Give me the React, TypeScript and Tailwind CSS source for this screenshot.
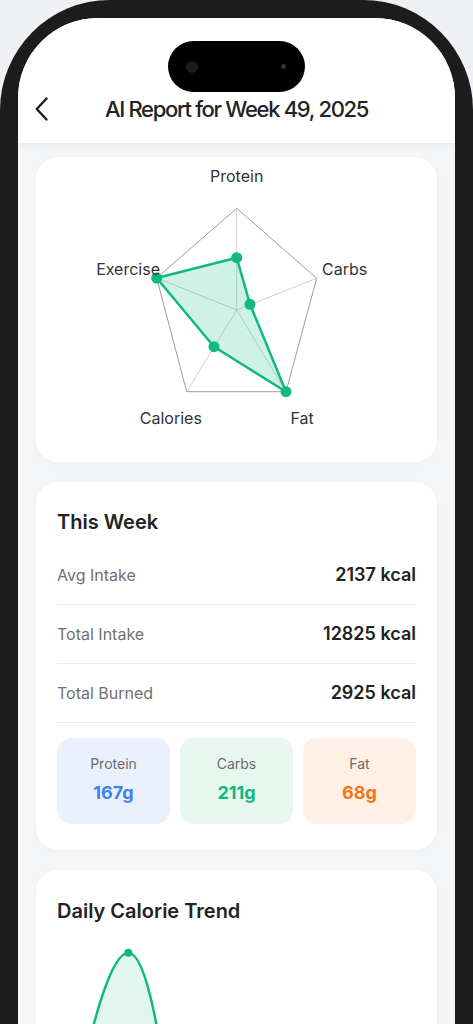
import React from "react";

const font = { fontFamily: "Inter, 'Noto Sans', sans-serif" };

function RadarCard() {
  const center = [200.7, 153];
  const vertices = [
    [200.7, 51.3],
    [280.7, 121.3],
    [250, 234.7],
    [150.7, 234.7],
    [120.7, 121],
  ];
  const data = [
    [200.7, 100.7],
    [214, 147.3],
    [250, 234.7],
    [178, 189.7],
    [120.7, 121],
  ];
  const pts = (arr: number[][]) => arr.map((p) => p.join(",")).join(" ");

  return (
    <div className="h-[305px] rounded-[22px] bg-white shadow-[0_1px_6px_rgba(0,0,0,0.03)]">
      <svg width="402" height="305" viewBox="0 0 402 305">
        {vertices.map((v, i) => (
          <line key={i} x1={center[0]} y1={center[1]} x2={v[0]} y2={v[1]} stroke="#c4c4c4" strokeWidth="0.8" />
        ))}
        <polygon points={pts(vertices)} fill="none" stroke="#9e9e9e" strokeWidth="1" />
        <polygon points={pts(data)} fill="rgba(16,185,129,0.2)" stroke="#10b981" strokeWidth="2.5" strokeLinejoin="round" />
        {data.map((p, i) => (
          <circle key={i} cx={p[0]} cy={p[1]} r="5.5" fill="#10b981" />
        ))}
        <g fill="#333" fontSize="16" style={font}>
          <text x="200.7" y="25" textAnchor="middle">Protein</text>
          <text x="286" y="118">Carbs</text>
          <text x="124" y="118" textAnchor="end">Exercise</text>
          <text x="134.8" y="267" textAnchor="middle">Calories</text>
          <text x="266.2" y="267" textAnchor="middle">Fat</text>
        </g>
      </svg>
    </div>
  );
}

function StatRow({ label, value }: { label: string; value: string }) {
  return (
    <div className="flex h-[59px] items-center justify-between border-b border-[#ececec]">
      <span className="text-base leading-6 text-[#707070]">{label}</span>
      <span className="text-lg leading-6 font-semibold text-[#222]">{value}</span>
    </div>
  );
}

function MacroBox({ label, value, bg, color }: { label: string; value: string; bg: string; color: string }) {
  return (
    <div className={`flex h-[86px] flex-col items-center rounded-[14px] pt-4 ${bg}`}>
      <span className="text-sm leading-5 text-[#6b6b6b]">{label}</span>
      <span className={`mt-[5px] text-lg leading-7 font-bold ${color}`}>{value}</span>
    </div>
  );
}

export default function App() {
  return (
    <div className="h-[1024px] overflow-hidden bg-[#eef0f4]" style={font}>
      <div className="h-full rounded-t-[110px] bg-[#1c1c1c] px-[18px] pt-[18px]">
        <div className="flex h-full flex-col overflow-hidden rounded-t-[80px] bg-[#f5f6f8]">
          {/* Header */}
          <div className="relative z-10 flex h-[125px] shrink-0 flex-col justify-end bg-white pb-3 shadow-[0_2px_8px_rgba(0,0,0,0.06)]">
            <div className="absolute left-[150px] top-[23px] h-[51px] w-[137px] rounded-full bg-black">
              <div className="absolute left-[18px] top-[20px] h-3 w-3 rounded-full bg-[#1b1b1d]" />
              <div className="absolute left-[113px] top-[23px] h-[5px] w-[5px] rounded-full bg-[#2b3356]" />
            </div>
            <div className="relative flex h-11 items-center justify-center">
              <svg className="absolute left-[17px]" width="13" height="24" viewBox="0 0 13 24">
                <polyline points="11.5,1.5 1.8,12 11.5,22.5" fill="none" stroke="#1f1f1f" strokeWidth="2.4" strokeLinecap="round" strokeLinejoin="round" />
              </svg>
              <h1 className="text-[22px] font-medium tracking-[-0.06em] text-[#222]">AI Report for Week 49, 2025</h1>
            </div>
          </div>

          {/* Content */}
          <div className="flex flex-col gap-5 px-[18px] pt-[14px]">
            <RadarCard />

            <div className="rounded-[22px] bg-white px-[21px] pt-[26px] pb-[26px] shadow-[0_1px_6px_rgba(0,0,0,0.03)]">
              <h2 className="text-xl leading-7 font-semibold text-[#222]">This Week</h2>
              <div className="mt-[10px]">
                <StatRow label="Avg Intake" value="2137 kcal" />
                <StatRow label="Total Intake" value="12825 kcal" />
                <StatRow label="Total Burned" value="2925 kcal" />
              </div>
              <div className="mt-[15px] grid grid-cols-3 gap-[10px]">
                <MacroBox label="Protein" value="167g" bg="bg-[#eaf1fd]" color="text-[#3b82f6]" />
                <MacroBox label="Carbs" value="211g" bg="bg-[#e7f7f0]" color="text-[#10b981]" />
                <MacroBox label="Fat" value="68g" bg="bg-[#fff0e6]" color="text-[#f97316]" />
              </div>
            </div>

            <div className="h-[300px] rounded-[22px] bg-white px-[21px] pt-[27px] shadow-[0_1px_6px_rgba(0,0,0,0.03)]">
              <h2 className="text-xl leading-7 font-semibold text-[#222]">Daily Calorie Trend</h2>
              <svg className="mt-[5px]" width="360" height="240" viewBox="0 0 360 240">
                <path d="M 0 240 C 30 120, 50 22.7, 71.3 22.7 C 90 22.7, 105 110, 120 240 Z" fill="rgba(16,185,129,0.12)" />
                <path d="M 0 240 C 30 120, 50 22.7, 71.3 22.7 C 90 22.7, 105 110, 120 240" fill="none" stroke="#10b981" strokeWidth="2.5" />
                <circle cx="71.3" cy="22.7" r="4" fill="#10b981" />
              </svg>
            </div>
          </div>
        </div>
      </div>
    </div>
  );
}
